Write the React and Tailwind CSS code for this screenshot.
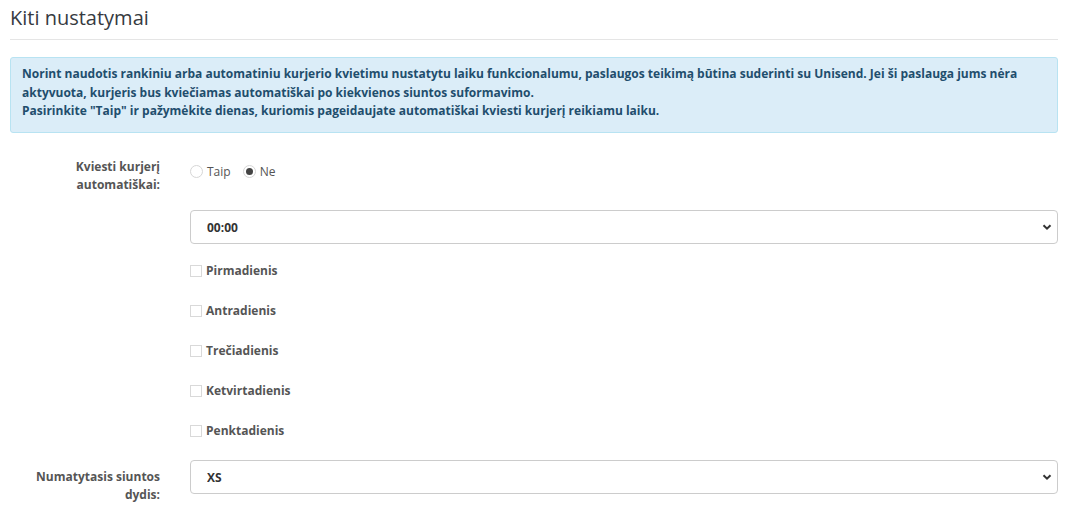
import React, { useState } from 'react';

const days = ['Pirmadienis', 'Antradienis', 'Trečiadienis', 'Ketvirtadienis', 'Penktadienis'];

const Chevron = () => (
  <svg width="10" height="10" viewBox="0 0 10 10" className="pointer-events-none absolute right-[6px] top-1/2 -translate-y-1/2">
    <path d="M1.5 3.2 L5 6.7 L8.5 3.2" fill="none" stroke="#333" strokeWidth="2" />
  </svg>
);

const Select = ({ value, options, onChange }) => (
  <div className="relative w-full">
    <select
      value={value}
      onChange={(e) => onChange(e.target.value)}
      className="h-[34px] w-full appearance-none rounded-[4px] border border-[#cccccc] bg-white pl-[16px] pt-[2px] text-[12px] font-bold text-[#333333] outline-none"
    >
      {options.map((o) => (
        <option key={o} value={o}>{o}</option>
      ))}
    </select>
    <Chevron />
  </div>
);

const Settings = () => {
  const [auto, setAuto] = useState('ne');
  const [time, setTime] = useState('00:00');
  const [size, setSize] = useState('XS');
  const [checked, setChecked] = useState({});

  return (
    <div className="min-h-screen bg-white px-[10px] pr-[9px] font-['Open_Sans',sans-serif] text-[12px] text-[#555555]">
      <h1 className="mt-[4px] border-b border-[#e5e5e5] pb-[7px] text-[20px] leading-[28px] font-normal text-[#363a41]">
        Kiti nustatymai
      </h1>

      <div className="mt-[17px] rounded-[3px] border border-[#b8e3f2] bg-[#dbedf8] pl-[11px] pr-[10px] pt-[7px] pb-[11px] text-[12px] leading-[18.5px] font-bold text-[#1f4e6d]">
        <p>
          Norint naudotis rankiniu arba automatiniu kurjerio kvietimu nustatytu laiku funkcionalumu, paslaugos teikimą būtina suderinti su Unisend. Jei ši paslauga jums nėra aktyvuota, kurjeris bus kviečiamas automatiškai po kiekvienos siuntos suformavimo.
        </p>
        <p>Pasirinkite "Taip" ir pažymėkite dienas, kuriomis pageidaujate automatiškai kviesti kurjerį reikiamu laiku.</p>
      </div>

      <div className="mt-[25px] flex items-start gap-[30px]">
        <label className="w-[150px] shrink-0 text-right font-bold leading-[18px]">
          Kviesti kurjerį
          <br />
          automatiškai:
        </label>
        <div className="mt-[5px] flex h-[18px] items-center gap-[4px] leading-[18px]">
          <label className="flex items-center gap-[4px]">
            <input
              type="radio"
              name="auto"
              checked={auto === 'taip'}
              onChange={() => setAuto('taip')}
              className="h-[13px] w-[13px] appearance-none rounded-full border border-[#d6d6d6] bg-white"
            />
            Taip
          </label>
          <label className="ml-[8px] flex items-center gap-[4px]">
            <span className="relative flex h-[13px] w-[13px] items-center justify-center rounded-full border border-[#d6d6d6] bg-white">
              <input
                type="radio"
                name="auto"
                checked={auto === 'ne'}
                onChange={() => setAuto('ne')}
                className="absolute inset-0 appearance-none"
              />
              {auto === 'ne' && <span className="h-[7px] w-[7px] rounded-full bg-[#444444]" />}
            </span>
            Ne
          </label>
        </div>
      </div>

      <div className="mt-[16px] flex gap-[30px]">
        <div className="w-[150px] shrink-0" />
        <div className="flex-1">
          <Select value={time} options={['00:00', '01:00', '02:00']} onChange={setTime} />
          <div className="mt-[17px] flex flex-col gap-[20px]">
            {days.map((d) => (
              <label key={d} className="flex h-[20px] items-center gap-[4px] font-bold">
                <input
                  type="checkbox"
                  checked={!!checked[d]}
                  onChange={() => setChecked({ ...checked, [d]: !checked[d] })}
                  className="h-[12px] w-[12px] appearance-none border border-[#d9d9d9] bg-white"
                />
                {d}
              </label>
            ))}
          </div>
        </div>
      </div>

      <div className="mt-[19px] flex items-start gap-[30px]">
        <label className="w-[150px] shrink-0 pt-[8px] text-right font-bold leading-[18px]">
          Numatytasis siuntos
          <br />
          dydis:
        </label>
        <div className="flex-1">
          <Select value={size} options={['XS', 'S', 'M', 'L', 'XL']} onChange={setSize} />
        </div>
      </div>
    </div>
  );
};

export default function App() {
  return <Settings />;
}
